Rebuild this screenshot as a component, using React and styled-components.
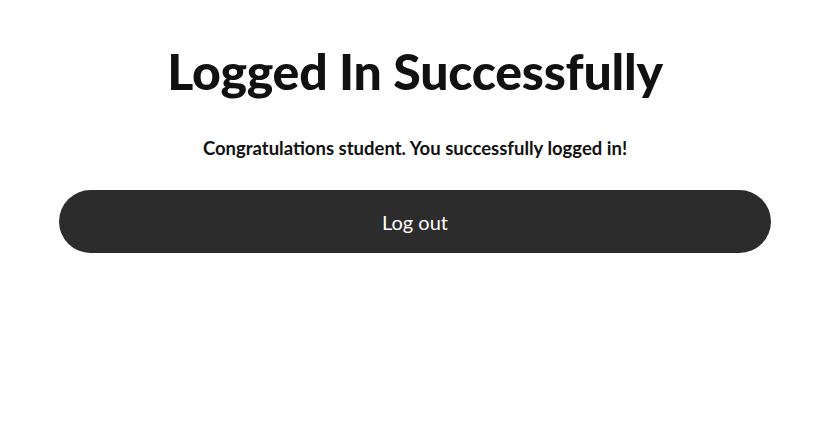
import React from "react";
import styled, { createGlobalStyle } from "styled-components";

const Global = createGlobalStyle`
  html, body { margin: 0; padding: 0; background: #fff; }
  body { font-family: Lato, "Noto Sans", sans-serif; color: #111; }
`;

const Page = styled.main`
  display: flex;
  flex-direction: column;
  align-items: center;
  padding: 39px 59px 0;
`;

const Title = styled.h1`
  margin: 0;
  font-size: 50px;
  font-weight: 900;
  line-height: 64px;
  letter-spacing: -0.25px;
  color: #111;
`;

const Message = styled.p`
  margin: 33px 0 0;
  font-size: 18.5px;
  font-weight: 700;
  line-height: 24px;
  color: #111;
`;

const LogoutButton = styled.button`
  margin-top: 30px;
  width: 100%;
  height: 63px;
  border: none;
  border-radius: 32px;
  background: #2c2c2c;
  color: #fff;
  font-family: Lato, "Noto Sans", sans-serif;
  font-size: 20px;
  font-weight: 400;
  cursor: pointer;
`;

export default function App() {
  return (
    <>
      <Global />
      <Page>
        <Title>Logged In Successfully</Title>
        <Message>Congratulations student. You successfully logged in!</Message>
        <LogoutButton>Log out</LogoutButton>
      </Page>
    </>
  );
}
